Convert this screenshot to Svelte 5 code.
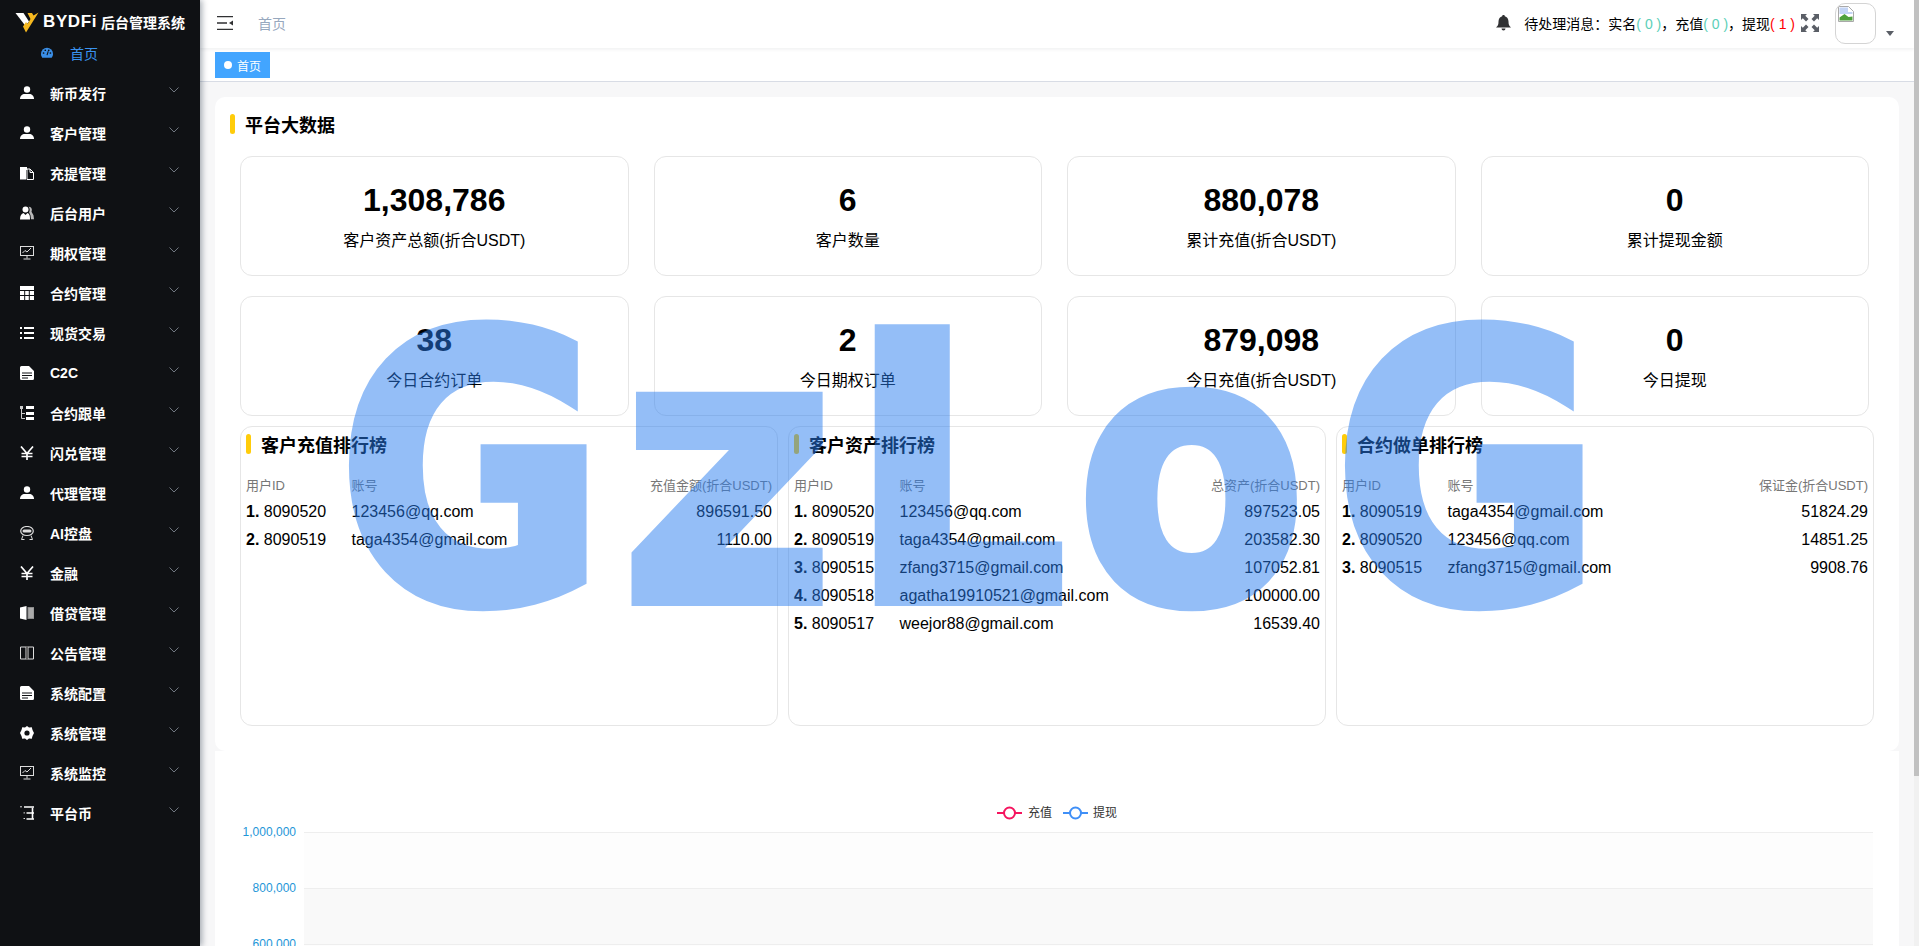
<script>
	const menu = [
		{ name: '新币发行', icon: 'user' },
		{ name: '客户管理', icon: 'user' },
		{ name: '充提管理', icon: 'docs' },
		{ name: '后台用户', icon: 'users' },
		{ name: '期权管理', icon: 'monitor' },
		{ name: '合约管理', icon: 'table' },
		{ name: '现货交易', icon: 'list' },
		{ name: 'C2C', icon: 'file' },
		{ name: '合约跟单', icon: 'tree' },
		{ name: '闪兑管理', icon: 'yen' },
		{ name: '代理管理', icon: 'user' },
		{ name: 'AI控盘', icon: 'robot' },
		{ name: '金融', icon: 'yen' },
		{ name: '借贷管理', icon: 'bookfill' },
		{ name: '公告管理', icon: 'book' },
		{ name: '系统配置', icon: 'file' },
		{ name: '系统管理', icon: 'gear' },
		{ name: '系统监控', icon: 'monitor' },
		{ name: '平台币', icon: 'listdot' }
	];

	const stats = [
		{ value: '1,308,786', label: '客户资产总额(折合USDT)' },
		{ value: '6', label: '客户数量' },
		{ value: '880,078', label: '累计充值(折合USDT)' },
		{ value: '0', label: '累计提现金额' },
		{ value: '38', label: '今日合约订单' },
		{ value: '2', label: '今日期权订单' },
		{ value: '879,098', label: '今日充值(折合USDT)' },
		{ value: '0', label: '今日提现' }
	];

	const ranks = [
		{
			title: '客户充值排行榜',
			column: '充值金额(折合USDT)',
			rows: [
				['8090520', '123456@qq.com', '896591.50'],
				['8090519', 'taga4354@gmail.com', '1110.00']
			]
		},
		{
			title: '客户资产排行榜',
			column: '总资产(折合USDT)',
			rows: [
				['8090520', '123456@qq.com', '897523.05'],
				['8090519', 'taga4354@gmail.com', '203582.30'],
				['8090515', 'zfang3715@gmail.com', '107052.81'],
				['8090518', 'agatha19910521@gmail.com', '100000.00'],
				['8090517', 'weejor88@gmail.com', '16539.40']
			]
		},
		{
			title: '合约做单排行榜',
			column: '保证金(折合USDT)',
			rows: [
				['8090519', 'taga4354@gmail.com', '51824.29'],
				['8090520', '123456@qq.com', '14851.25'],
				['8090515', 'zfang3715@gmail.com', '9908.76']
			]
		}
	];

	const ticks = ['1,000,000', '800,000', '600,000', '400,000', '200,000', '0'];
</script>

<div class="app">
	<aside class="sidebar">
		<div class="logo">
			<svg class="logo-mark" viewBox="0 0 24 21" width="24" height="21">
				<polygon points="0.5,1 8.5,1 14,9.500 10.5,14" fill="#fff" />
				<polygon points="23.5,0.5 11,20.5 8,14.5 11,10 12.5,12 15.5,7 12.5,1 17,1 18.5,3.5" fill="#f5b81f" />
			</svg>
			<span class="brand">BYDFi</span>
			<span class="logo-title">后台管理系统</span>
		</div>
		<div class="home-item">
			<svg viewBox="0 0 14 14" width="14" height="12">
				<path d="M7 1a7 7 0 0 0-7 7c0 1.900.6 3.500 1.500 4.500h11c.9-1 1.500-2.600 1.500-4.500a7 7 0 0 0-7-7z" fill="#3a8ee6" />
				<circle cx="3" cy="7" r="1" fill="#0f1114" />
				<circle cx="5" cy="3.800" r="1" fill="#0f1114" />
				<circle cx="9" cy="3.800" r="1" fill="#0f1114" />
				<circle cx="11" cy="7" r="1" fill="#0f1114" />
				<path d="M7 9.500 8.500 5" stroke="#0f1114" stroke-width="1.200" />
			</svg>
			<span>首页</span>
		</div>
		{#each menu as item}
			<div class="menu-item">
				<svg class="menu-icon" viewBox="0 0 14 14" width="14" height="14">
					{#if item.icon === 'user'}
						<circle cx="7" cy="3.500" r="3.200" fill="#fff" />
						<path d="M0 13c0-3.500 2.500-5 4.500-5h5c2 0 4.500 1.500 4.500 5z" fill="#fff" />
					{:else if item.icon === 'docs'}
						<path d="M0 1h7v3h-1v9.500H0z" fill="#fff" />
						<path d="M7 3h3l3.500 3.500v7h-6.500z" fill="#0f1114" stroke="#fff" />
						<path d="M10 3v3.500h3.500" fill="none" stroke="#fff" />
					{:else if item.icon === 'users'}
						<circle cx="5.500" cy="3.500" r="3" fill="#fff" />
						<path d="M0 13.500c0-4 1.500-6 3.500-6.500l2 2 2-2c2 .5 2.500 2.500 2.500 6.500z" fill="#fff" />
						<path d="M9 .8c2.500.3 3.500 2.500 2.500 5l2 3.500.5 4h-3l-.5-4-1.500-3c1-1.500 1-4-.5-5.500z" fill="#b9b9b9" />
					{:else if item.icon === 'monitor'}
						<rect x="0.500" y="0.500" width="13" height="9" fill="none" stroke="#ddd" />
						<path d="M2.500 7 5 4.500 7 6l4-4M7 10v2.500M3.500 13h7" fill="none" stroke="#ddd" />
					{:else if item.icon === 'table'}
						<rect x="0" y="0" width="14" height="14" fill="#fff" />
						<path d="M0 4.500h14M0 9.500h14M4.700 4.500V14M9.300 4.500V14" stroke="#0f1114" />
					{:else if item.icon === 'list'}
						<path d="M0 2h2M0 7h2M0 12h2" stroke="#fff" stroke-width="2" />
						<path d="M4 2h10M4 7h10M4 12h10" stroke="#fff" stroke-width="2" />
					{:else if item.icon === 'file'}
						<path d="M1.500 0H9l5 5v7.500a1.500 1.500 0 0 1-1.500 1.500h-11A1.500 1.500 0 0 1 0 12.500v-11A1.500 1.500 0 0 1 1.500 0z" fill="#fff" />
						<path d="M2 7h10M2 9.500h10M2 12h6" stroke="#0f1114" />
					{:else if item.icon === 'tree'}
						<rect x="0" y="0" width="3" height="3" fill="#ccc" />
						<path d="M1.500 3v9.500H5M1.500 7.500H5" fill="none" stroke="#ccc" />
						<path d="M6 1.500h8M6 7.500h8M6 12.500h8" stroke="#fff" stroke-width="3" />
					{:else if item.icon === 'yen'}
						<path d="M1 .5l6 7 6-7M7 7.500V14M1.500 7.500h11M1.500 10.500h11" fill="none" stroke="#fff" stroke-width="1.700" />
					{:else if item.icon === 'robot'}
						<ellipse cx="7" cy="5" rx="6.300" ry="4.500" fill="none" stroke="#ddd" stroke-width="1.200" />
						<rect x="2.500" y="3.500" width="9" height="3" rx="1.500" fill="#ddd" />
						<path d="M3 9.500 1.500 13.500h3M11 9.500l1.500 4h-3" fill="none" stroke="#ddd" />
					{:else if item.icon === 'bookfill'}
						<path d="M0 1.500 6.500 0v14L0 12.500z" fill="#fff" />
						<path d="M7.500 1h6.500v12H7.500z" fill="#8a8a8a" />
						<path d="M8.500 3h5M8.500 5h5M8.500 7h5M8.500 9h5M8.500 11h5" stroke="#ddd" stroke-width=".8" />
					{:else if item.icon === 'book'}
						<path d="M.5 1H6v12H.5zM8 1h5.500v12H8z" fill="none" stroke="#ddd" />
						<rect x="6" y="0" width="2" height="14" fill="#666" />
					{:else if item.icon === 'gear'}
						<path d="M7 0l2 1.500 2.800-.2.700 2.700L14 7l-1.500 3-.7 2.700-2.800-.2L7 14l-2-1.500-2.800.2-.7-2.700L0 7l1.500-3 .7-2.700 2.800.2z" fill="#fff" />
						<circle cx="7" cy="7" r="2.600" fill="#0f1114" />
					{:else if item.icon === 'listdot'}
						<path d="M0 .8h2M3.500 6.900h1.500M3.500 12.500h1.500" stroke="#ddd" />
						<path d="M4 1h10M6.500 7h7.500M6.500 13h7.500" stroke="#fff" stroke-width="1.600" />
						<path d="M12.500 1.800v11" stroke="#fff" stroke-width="1.600" />
					{/if}
				</svg>
				<span class="menu-name">{item.name}</span>
				<svg class="chevron" viewBox="0 0 10 6" width="10" height="6">
					<path d="M.5.5 5 5 9.500.5" fill="none" stroke="#707780" />
				</svg>
			</div>
		{/each}
	</aside>

	<div class="right">
		<header class="navbar">
			<svg class="hamburger" viewBox="0 0 16 14" width="16" height="14">
				<path d="M0 .5h16M0 7h10M0 13.500h16" stroke="#303133" stroke-width="1.500" />
				<path d="M12 7l4-2.500v5z" fill="#303133" />
			</svg>
			<span class="crumb">首页</span>
			<div class="nav-right">
				<svg class="bell" viewBox="0 0 15 16" width="15" height="16">
					<path d="M7.500 0c.8 0 1.300.5 1.300 1.200C11 1.800 12.500 3.800 12.500 6.500c0 3 .5 4.300 2.500 6H0c2-1.700 2.500-3 2.500-6 0-2.700 1.500-4.700 3.700-5.300C6.200.5 6.700 0 7.500 0z" fill="#303133" />
					<path d="M5.500 13.500h4a2 2 0 0 1-4 0z" fill="#303133" />
				</svg>
				<div class="notice">
					待处理消息：实名<span class="ok">( 0 )</span>，充值<span class="ok">( 0 )</span>，提现<span class="bad">( 1 )</span>
				</div>
				<svg class="fullscreen" viewBox="0 0 18 18" width="18" height="18">
					<path d="M0 0h6L4.300 1.800 7.500 5 5 7.500 1.800 4.300 0 6zM18 0v6l-1.800-1.700L13 7.500 10.500 5l3.200-3.200L12 0zM0 18v-6l1.800 1.700L5 10.500 7.500 13l-3.200 3.200L6 18zM18 18h-6l1.700-1.800L10.500 13l2.500-2.500 3.200 3.200L18 12z" fill="#5a5e66" />
				</svg>
				<div class="avatar">
					<svg viewBox="0 0 16 16" width="16" height="16">
						<path d="M.5.500h10l5 5v10H.5z" fill="#fff" stroke="#a9a9a9" />
						<path d="M1.500 1.500h8.500v4.500h4.500v2H1.500z" fill="#c3d4f5" />
						<path d="M1.500 14.500v-3l5-3.500 4 3 4-.5v4z" fill="#4ea03c" />
					</svg>
				</div>
				<span class="caret"></span>
			</div>
		</header>
		<div class="tags">
			<span class="tag"><i></i>首页</span>
		</div>
		<main class="content">
			<section class="panel">
				<h2 class="heading"><i></i>平台大数据</h2>
				<div class="stats">
					{#each stats as stat}
						<div class="stat">
							<div class="stat-value">{stat.value}</div>
							<div class="stat-label">{stat.label}</div>
						</div>
					{/each}
				</div>
				<div class="ranks">
					{#each ranks as rank}
						<div class="rank">
							<h3 class="rank-title"><i></i>{rank.title}</h3>
							<table>
								<thead>
									<tr>
										<th class="col-id">用户ID</th>
										<th>账号</th>
										<th class="num">{rank.column}</th>
									</tr>
								</thead>
								<tbody>
									{#each rank.rows as row, i}
										<tr>
											<td><b>{i + 1}.</b> {row[0]}</td>
											<td>{row[1]}</td>
											<td class="num">{row[2]}</td>
										</tr>
									{/each}
								</tbody>
							</table>
						</div>
					{/each}
				</div>
			</section>
			<section class="chart">
				<svg viewBox="0 0 1684 403" width="1684" height="403">
					<g class="legend">
						<path d="M782 62h25" stroke="#f5145f" stroke-width="2" />
						<circle cx="794.500" cy="62" r="5.500" fill="#fff" stroke="#f5145f" stroke-width="2" />
						<text x="813" y="66">充值</text>
						<path d="M848 62h25" stroke="#3f8ff7" stroke-width="2" />
						<circle cx="860.500" cy="62" r="5.500" fill="#fff" stroke="#3f8ff7" stroke-width="2" />
						<text x="878" y="66">提现</text>
					</g>
					{#each ticks as tick, i}
						{#if i < ticks.length - 1}
							<rect x="89" y={81 + i * 56} width="1569" height="56" fill={i % 2 ? '#f9f9f9' : '#fdfdfd'} />
						{/if}
						<path d="M89 {81.5 + i * 56}H1658" stroke="#eeeeee" />
						<text class="tick" x="81" y={85 + i * 56} text-anchor="end">{tick}</text>
					{/each}
				</svg>
			</section>
		</main>
	</div>

	<div class="scrollbar"><div class="thumb"></div></div>

	<div class="watermark" aria-hidden="true">
		<span class="g1">G</span><span class="z">z</span><span class="l">L</span><span class="o">o</span><span class="g2">G</span>
	</div>
</div>

<style>
	:global(body) {
		margin: 0;
		overflow: hidden;
		font-family: 'Liberation Sans', 'Noto Sans CJK SC', sans-serif;
		color: #000;
	}

	.app {
		position: relative;
		display: flex;
		height: 100vh;
		overflow: hidden;
		background: #f7f7f8;
	}

	.sidebar {
		width: 200px;
		flex: none;
		background: #0f1114;
		color: #fff;
		box-shadow: 2px 0 6px rgba(0, 21, 41, 0.35);
		z-index: 2;
	}

	.logo {
		height: 28px;
		padding-left: 15px;
		margin-bottom: 5px;
		display: flex;
		align-items: center;
		font-weight: 700;
		white-space: nowrap;
		position: relative;
		top: 8px;
	}

	.logo-mark {
		flex: none;
	}

	.brand {
		margin-left: 4px;
		font-size: 17px;
		letter-spacing: 0.6px;
	}

	.logo-title {
		margin-left: 4px;
		font-size: 14px;
	}

	.home-item {
		height: 40px;
		padding-left: 40px;
		display: flex;
		align-items: center;
		gap: 16px;
		font-size: 14px;
		color: #3a93f0;
	}

	.menu-item {
		height: 40px;
		padding-left: 20px;
		display: flex;
		align-items: center;
		font-size: 14px;
		font-weight: 700;
	}

	.menu-icon {
		flex: none;
	}

	.menu-name {
		margin-left: 16px;
		flex: 1;
	}

	.chevron {
		margin-right: 21px;
		position: relative;
		top: -3px;
	}

	.right {
		flex: 1;
		min-width: 0;
		height: 100vh;
		overflow: hidden;
	}

	.scrollbar {
		width: 5px;
		flex: none;
		background: #f1f1f1;
	}

	.thumb {
		height: 776px;
		background: #c1c1c1;
	}

	.navbar {
		height: 48px;
		box-sizing: border-box;
		padding-bottom: 2px;
		background: #fff;
		box-shadow: 0 1px 4px rgba(0, 21, 41, 0.08);
		display: flex;
		align-items: center;
		position: relative;
	}

	.hamburger {
		margin-left: 17px;
	}

	.crumb {
		margin-left: 25px;
		font-size: 14px;
		color: #97a8be;
	}

	.nav-right {
		margin-left: auto;
		display: flex;
		align-items: center;
		height: 100%;
	}

	.bell {
		margin-right: 13px;
	}

	.notice {
		font-size: 14px;
		white-space: nowrap;
	}

	.ok {
		color: #5ccfb8;
	}

	.bad {
		color: #f00;
	}

	.fullscreen {
		margin-left: 6px;
	}

	.avatar {
		width: 37px;
		height: 37px;
		margin-left: 16px;
		border: 1px solid #d4d4d4;
		border-radius: 10px;
		padding: 2px 0 0 2px;
		overflow: hidden;
	}

	.avatar svg {
		display: block;
	}

	.caret {
		width: 0;
		height: 0;
		margin: 20px 20px 0 10px;
		border: 4px solid transparent;
		border-top: 5px solid #5a5e66;
		border-bottom: 0;
	}

	.tags {
		height: 34px;
		box-sizing: border-box;
		background: #fff;
		border-bottom: 1px solid #d8dce5;
		padding: 4px 0 0 15px;
	}

	.tag {
		display: inline-flex;
		align-items: center;
		height: 26px;
		padding: 0 9px;
		background: #42a5ff;
		color: #fff;
		font-size: 12px;
	}

	.tag i {
		width: 8px;
		height: 8px;
		margin-right: 5px;
		background: #fff;
		border-radius: 50%;
	}

	.content {
		padding: 15px 15px 0;
	}

	.panel {
		background: #fff;
		border-radius: 10px;
		padding: 17px 25px 25px;
	}

	.heading {
		margin: 0 0 22px -10px;
		height: 20px;
		display: flex;
		align-items: center;
		font-size: 18px;
		font-weight: 700;
	}

	.heading i,
	.rank-title i {
		width: 5px;
		height: 20px;
		margin-right: 10px;
		background: #ffcc0a;
		border-radius: 3px;
		flex: none;
	}

	.stats {
		display: grid;
		grid-template-columns: repeat(4, 1fr);
		gap: 20px 25px;
		margin-right: 5px;
	}

	.stat {
		height: 120px;
		box-sizing: border-box;
		border: 1px solid #e6e6e6;
		border-radius: 12px;
		text-align: center;
		padding-top: 25px;
	}

	.stat-value {
		font-size: 32px;
		font-weight: 700;
		line-height: 37px;
	}

	.stat-label {
		margin-top: 11px;
		font-size: 16px;
		line-height: 22px;
	}

	.ranks {
		display: grid;
		grid-template-columns: repeat(3, 1fr);
		gap: 10px;
		margin-top: 10px;
	}

	.rank {
		height: 300px;
		box-sizing: border-box;
		border: 1px solid #e6e6e6;
		border-radius: 12px;
		padding: 7px 5px 0;
	}

	.rank-title {
		margin: 0 0 17px;
		height: 20px;
		display: flex;
		align-items: center;
		font-size: 18px;
		font-weight: 700;
	}

	table {
		width: 100%;
		border-collapse: collapse;
		table-layout: fixed;
	}

	th {
		height: 27px;
		padding: 0;
		font-size: 13px;
		font-weight: 400;
		text-align: left;
		color: #777;
	}

	td {
		height: 28px;
		padding: 0;
		font-size: 16px;
		white-space: nowrap;
	}

	.col-id {
		width: 105.5px;
	}

	.num {
		text-align: right;
		width: 160px;
	}

	.chart {
		background: #fff;
		height: 403px;
		overflow: hidden;
	}

	.chart svg {
		display: block;
	}

	.chart text {
		font-size: 12px;
	}

	.legend text {
		fill: #333;
	}

	.chart .tick {
		fill: #1e96d8;
	}

	/* big overlay stamped over the page, letters placed one by one */
	.watermark {
		position: absolute;
		left: 0;
		top: 287px;
		z-index: 5;
		opacity: 0.5;
		font-family: 'DejaVu Sans', sans-serif;
		font-weight: 700;
		font-size: 370px;
		line-height: 1;
		color: rgb(41, 125, 239);
		-webkit-text-stroke: 12px rgb(41, 125, 239);
		pointer-events: none;
	}

	.watermark span {
		position: absolute;
		top: 0;
		transform-origin: left top;
	}

	.g1 {
		left: 338px;
		transform: scaleX(0.88);
	}

	.z {
		left: 621px;
		transform: scaleX(0.99);
	}

	.l {
		left: 849px;
		transform: scaleX(0.92);
	}

	.o {
		left: 1077px;
		transform: scaleX(0.9);
	}

	.g2 {
		left: 1334px;
		transform: scaleX(0.88);
	}
</style>
